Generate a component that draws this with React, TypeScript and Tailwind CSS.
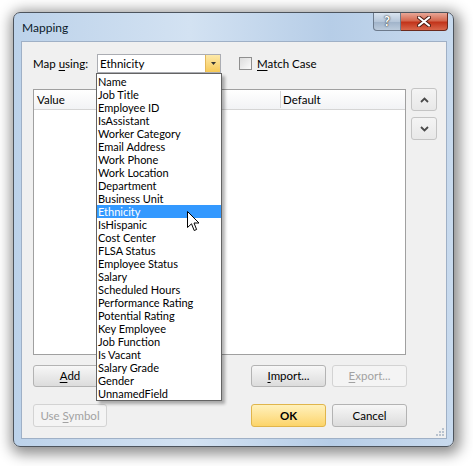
import React from "react";

const items = [
  "Name",
  "Job Title",
  "Employee ID",
  "IsAssistant",
  "Worker Category",
  "Email Address",
  "Work Phone",
  "Work Location",
  "Department",
  "Business Unit",
  "Ethnicity",
  "IsHispanic",
  "Cost Center",
  "FLSA Status",
  "Employee Status",
  "Salary",
  "Scheduled Hours",
  "Performance Rating",
  "Potential Rating",
  "Key Employee",
  "Job Function",
  "Is Vacant",
  "Salary Grade",
  "Gender",
  "UnnamedField",
];

function Button({
  children,
  w,
  h,
  kind = "normal",
}: {
  children: React.ReactNode;
  w: string;
  h: string;
  kind?: "normal" | "disabled" | "default";
}) {
  const base = `${w} ${h} flex items-center justify-center rounded-[3px] border text-[11.5px] leading-none`;
  if (kind === "disabled")
    return (
      <div className={`${base} border-[#d3d3d3] bg-[#f4f4f4] text-[#a2a2a2]`}>
        <span>{children}</span>
      </div>
    );
  if (kind === "default")
    return (
      <div
        className={`${base} border-[#e0b54c] bg-gradient-to-b from-[#fff1bb] to-[#fcd469] font-bold text-black`}
      >
        <span>{children}</span>
      </div>
    );
  return (
    <div
      className={`${base} border-[#b3b3b3] bg-gradient-to-b from-[#f7f7f7] to-[#dcdcdc] text-black`}
    >
      <span>{children}</span>
    </div>
  );
}

export default function App() {
  return (
    <div className="relative h-[466px] w-[473px] overflow-hidden bg-white font-['Lato','Noto_Sans',sans-serif] text-[11.5px] text-black">
      {/* Window */}
      <div className="ml-[13px] mt-[12px] flex h-[435px] w-[441px] flex-col rounded-[7px] border border-[#4d545d] bg-[linear-gradient(90deg,#bcd2ea,#d3e2f2_40%,#b6cde7_72%,#c8daee)] pb-[7px] pl-[7px] pr-[6px] shadow-[2px_3px_14px_4px_rgba(0,0,0,0.45)]">
        {/* Title bar */}
        <div className="relative flex h-[28px] items-center">
          <span className="pl-[1px] pt-[2px] text-[12px] text-[#0b1a2b]">Mapping</span>
          <div className="absolute right-[-1px] top-0 flex">
            <div className="flex h-[18px] w-[28px] items-center justify-center rounded-bl-[4px] border border-t-0 border-[#6c7a8c] bg-[linear-gradient(180deg,#d9e4f0,#b6c6d9_50%,#9fb2c9_51%,#bccbdc)]">
              <span className="text-[13px] font-bold leading-none text-white [text-shadow:0_0_1px_#333,0_0_2px_#333]">?</span>
            </div>
            <div className="flex h-[18px] w-[47px] items-center justify-center rounded-br-[4px] border border-l-0 border-t-0 border-[#6b2a1e] bg-[linear-gradient(180deg,#e8a797,#d4684f_45%,#c2341b_55%,#d9674b)]">
              <svg width="14" height="11" viewBox="0 0 14 11">
                <path
                  d="M2 1.5 L12 9.5 M12 1.5 L2 9.5"
                  stroke="#4a1a10"
                  strokeWidth="4"
                  strokeLinecap="round"
                />
                <path
                  d="M2 1.5 L12 9.5 M12 1.5 L2 9.5"
                  stroke="#ffffff"
                  strokeWidth="2.2"
                  strokeLinecap="round"
                />
              </svg>
            </div>
          </div>
        </div>

        {/* Client area */}
        <div className="relative flex flex-1 flex-col border border-[#9fb0c6] bg-[#f0f0f0] pl-[11px] pt-[12px]">
          {/* Row 1 */}
          <div className="flex h-[19px] items-center">
            <div className="w-[64px]">
              Map <u className="underline-offset-2">u</u>sing:
            </div>
            <div className="flex h-[19px] w-[124px] items-stretch border border-[#abadb3] bg-white">
              <div className="flex flex-1 items-center pl-[2px]">Ethnicity</div>
              <div className="flex w-[15px] items-center justify-center border-l border-[#e3b75a] bg-gradient-to-b from-[#fde9a8] to-[#f7c954]">
                <svg width="5" height="3" viewBox="0 0 5 3">
                  <path d="M0 0 L5 0 L2.5 3 Z" fill="#333" />
                </svg>
              </div>
            </div>
            <div className="ml-[18px] h-[13px] w-[13px] border border-[#8f8f8f] bg-gradient-to-br from-[#dcdcdc] to-[#fbfbfb]" />
            <div className="ml-[5px]">
              <u className="underline-offset-2">M</u>atch Case
            </div>
          </div>

          {/* List view + arrows */}
          <div className="mt-[16px] flex items-start">
            <div className="flex h-[266px] w-[373px] flex-col border border-[#a0a0a0] bg-white">
              <div className="flex h-[20px] items-stretch border-b border-[#d5d5d5] bg-gradient-to-b from-white to-[#f2f3f5]">
                <div className="flex w-[246px] items-center pl-[3px]">Value</div>
                <div className="my-[1px] w-px bg-[#d6d6d6]" />
                <div className="flex flex-1 items-center pl-[2px]">Default</div>
              </div>
            </div>
            <div className="-mt-[1px] ml-[5px] flex flex-col gap-[6px]">
              <div className="flex h-[23px] w-[26px] items-center justify-center rounded-[3px] border border-[#c4c4c4] bg-gradient-to-b from-[#f4f4f4] to-[#e8e8e8]">
                <svg width="9" height="6" viewBox="0 0 9 6">
                  <path d="M1 5 L4.5 1.5 L8 5" stroke="#4a4a4a" strokeWidth="1.8" fill="none" />
                </svg>
              </div>
              <div className="flex h-[23px] w-[26px] items-center justify-center rounded-[3px] border border-[#c4c4c4] bg-gradient-to-b from-[#f4f4f4] to-[#e8e8e8]">
                <svg width="9" height="6" viewBox="0 0 9 6">
                  <path d="M1 1 L4.5 4.5 L8 1" stroke="#4a4a4a" strokeWidth="1.8" fill="none" />
                </svg>
              </div>
            </div>
          </div>

          {/* Button row 1 */}
          <div className="mt-[10px] flex">
            <Button w="w-[74px]" h="h-[22px]">
              <u className="underline-offset-2">A</u>dd
            </Button>
            <div className="ml-[144px]">
              <Button w="w-[75px]" h="h-[22px]">
                <u className="underline-offset-2">I</u>mport...
              </Button>
            </div>
            <div className="ml-[6px]">
              <Button w="w-[75px]" h="h-[22px]" kind="disabled">
                <u className="underline-offset-2">E</u>xport...
              </Button>
            </div>
          </div>

          {/* Button row 2 */}
          <div className="mt-[17px] flex">
            <Button w="w-[74px]" h="h-[23px]" kind="disabled">
              Use <u className="underline-offset-2">S</u>ymbol
            </Button>
            <div className="ml-[144px]">
              <Button w="w-[75px]" h="h-[23px]" kind="default">
                OK
              </Button>
            </div>
            <div className="ml-[6px]">
              <Button w="w-[75px]" h="h-[23px]">
                Cancel
              </Button>
            </div>
          </div>

          {/* Resize grip */}
          <svg className="absolute bottom-[1px] right-[1px]" width="10" height="10" viewBox="0 0 10 10">
            {[
              [8, 2],
              [8, 5],
              [5, 5],
              [8, 8],
              [5, 8],
              [2, 8],
            ].map(([x, y], i) => (
              <rect key={i} x={x - 1} y={y - 1} width="2" height="2" fill="#b9c3cf" />
            ))}
          </svg>

          {/* Dropdown list */}
          <div className="absolute left-[74px] top-[31px] h-[328px] w-[126px] border border-[#646464] bg-white pt-[1px] shadow-[3px_3px_3px_rgba(0,0,0,0.3)]">
            {items.map((it) => (
              <div
                key={it}
                className={`h-[13px] whitespace-nowrap pl-[1px] text-[11px] leading-[13px] ${
                  it === "Ethnicity" ? "bg-[#3399ff] text-white" : "text-black"
                }`}
              >
                {it}
              </div>
            ))}
          </div>

          {/* Mouse cursor */}
          <svg className="absolute left-[165px] top-[169px]" width="13" height="21" viewBox="0 0 13 21">
            <path
              d="M0.5 0.5 L0.5 16.5 L4.5 12.8 L7.2 19.5 L9.6 18.5 L7 12 L12 12 Z"
              fill="#ffffff"
              stroke="#000000"
              strokeWidth="1"
              strokeLinejoin="miter"
            />
          </svg>
        </div>
      </div>
    </div>
  );
}
